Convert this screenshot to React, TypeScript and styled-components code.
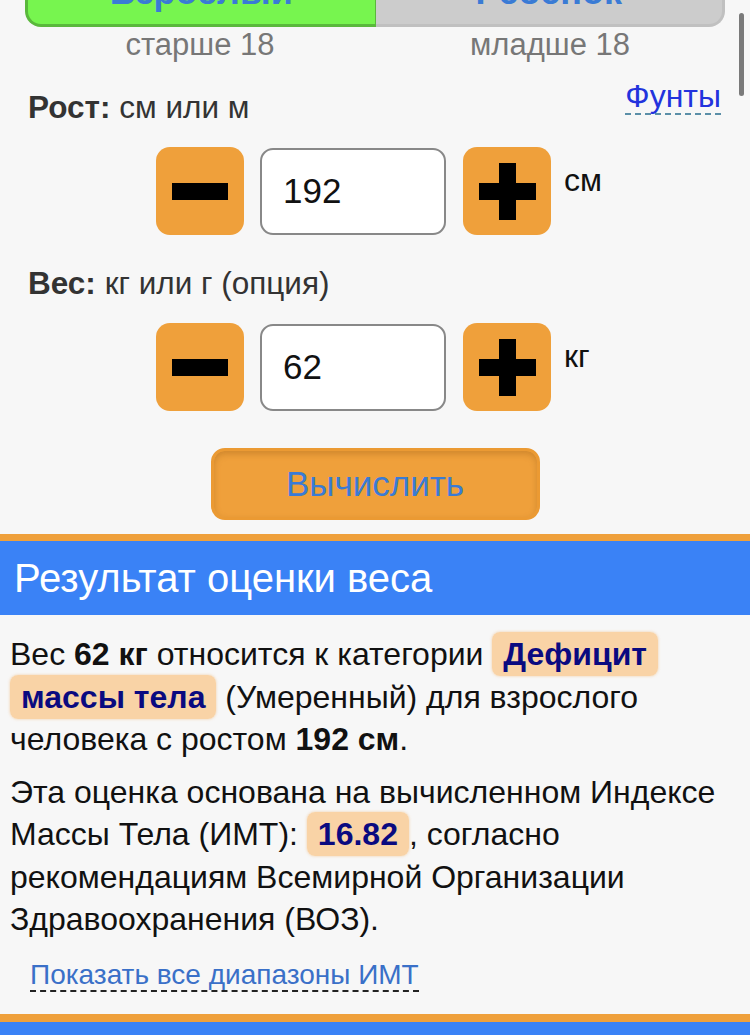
import React from "react";
import styled, { createGlobalStyle } from "styled-components";

const GlobalStyle = createGlobalStyle`
  html, body {
    margin: 0;
    padding: 0;
    background: #f7f7f7;
    font-family: "Liberation Sans", Arial, sans-serif;
    color: #111;
  }
`;

const Page = styled.div`
  width: 750px;
  min-height: 1035px;
  overflow: hidden;
  background: #f7f7f7;
`;

const Calculator = styled.div`
  padding: 0 25px;
`;

const TabsClip = styled.div`
  height: 27px;
  overflow: hidden;
  display: flex;
  align-items: flex-end;
`;

const Tabs = styled.div`
  display: flex;
  width: 100%;
  height: 90px;
  flex-shrink: 0;
`;

const Tab = styled.div<{ $active?: boolean }>`
  flex: 1;
  display: flex;
  align-items: flex-end;
  justify-content: center;
  font-size: 36px;
  line-height: 36px;
  font-weight: bold;
  color: #3a7bd5;
  background: ${(p) => (p.$active ? "#77f54f" : "#cccccc")};
  border: 3px solid ${(p) => (p.$active ? "#5ab83c" : "#c0c0c0")};
  border-top: none;
  ${(p) => (p.$active ? "border-right: 1px solid #5ab83c;" : "border-left: none;")}
  border-radius: ${(p) => (p.$active ? "0 0 0 16px" : "0 0 16px 0")};
  padding-bottom: 14px;
`;

const TabNotes = styled.div`
  display: flex;
  font-size: 31px;
  color: #777;
`;

const TabNote = styled.div`
  flex: 1;
  text-align: center;
  line-height: 36px;
`;

const FieldHead = styled.div<{ $gap: number }>`
  display: flex;
  justify-content: space-between;
  align-items: flex-start;
  margin-top: ${(p) => p.$gap}px;
  padding: 0 4px 0 3px;
  font-size: 31.5px;
  line-height: 36px;
  color: #333;
`;

const FieldLabel = styled.div`
  b {
    font-weight: bold;
  }
`;

const DashedLink = styled.span`
  color: #2233dd;
  font-size: 32px;
  line-height: 34px;
  border-bottom: 2px dashed #5b8fa8;
  margin-top: -10px;
`;

const StepRow = styled.div`
  display: flex;
  align-items: center;
  margin-top: 22px;
  padding-left: 131px;
`;

const StepButton = styled.div`
  width: 88px;
  height: 88px;
  border-radius: 14px;
  background: #efa03b;
  display: flex;
  align-items: center;
  justify-content: center;
  flex-shrink: 0;
`;

const NumberBox = styled.div`
  width: 186px;
  height: 87px;
  box-sizing: border-box;
  margin: 0 17px 0 16px;
  border: 2px solid #888;
  border-radius: 13px;
  background: #fff;
  font-size: 35px;
  color: #111;
  display: flex;
  align-items: center;
  padding-left: 21px;
`;

const Unit = styled.div`
  font-size: 32px;
  line-height: 36px;
  color: #111;
  align-self: flex-start;
  margin: 15px 0 0 13px;
`;

const CalcWrap = styled.div`
  display: flex;
  justify-content: center;
  margin-top: 37px;
`;

const CalcButton = styled.div`
  width: 329px;
  height: 72px;
  box-sizing: border-box;
  border-radius: 14px;
  background: #efa03b;
  border: 3px solid #eb9a33;
  box-shadow: inset 0 3px 6px rgba(150, 90, 20, 0.35);
  color: #3a7bd5;
  font-size: 35px;
  display: flex;
  align-items: center;
  justify-content: center;
`;

const SectionHead = styled.div`
  margin-top: 14px;
  border-top: 7px solid #efa03b;
  background: #3a82f6;
  color: #fff;
  font-size: 40px;
  height: 74px;
  display: flex;
  align-items: center;
  padding-left: 14px;
`;

const Result = styled.div`
  padding: 18px 10px 0 10px;
  font-size: 32px;
  line-height: 42.5px;
`;

const Para = styled.p`
  margin: 0 0 10px 0;
`;

const Badge = styled.span`
  background: #f9d3a6;
  color: #0a0a80;
  font-weight: bold;
  border-radius: 8px;
  padding: 4px 11px;
  box-shadow: 0 0 3px rgba(240, 180, 110, 0.6);
  box-decoration-break: clone;
  -webkit-box-decoration-break: clone;
`;

const MoreLink = styled.div`
  margin: 16px 0 0 20px;
  font-size: 28px;
  line-height: 36px;
  span {
    color: #3a70c8;
    border-bottom: 2px dashed #222;
  }
`;

const Footer = styled.div`
  margin-top: 21px;
  border-top: 8px solid #efa03b;
  background: #3a82f6;
  height: 40px;
`;

const ScrollThumb = styled.div`
  position: fixed;
  right: 6px;
  top: 13px;
  width: 5px;
  height: 83px;
  border-radius: 3px;
  background: #7a7a7a;
`;

const Minus = () => (
  <svg width="56" height="17" viewBox="0 0 56 17">
    <rect width="56" height="17" fill="#000" />
  </svg>
);

const Plus = () => (
  <svg width="57" height="57" viewBox="0 0 57 57">
    <rect x="0" y="20" width="57" height="17" fill="#000" />
    <rect x="20" y="0" width="17" height="57" fill="#000" />
  </svg>
);

function Stepper({ value, unit }: { value: string; unit: string }) {
  return (
    <StepRow>
      <StepButton>
        <Minus />
      </StepButton>
      <NumberBox>{value}</NumberBox>
      <StepButton>
        <Plus />
      </StepButton>
      <Unit>{unit}</Unit>
    </StepRow>
  );
}

export default function App() {
  return (
    <Page>
      <GlobalStyle />
      <Calculator>
        <TabsClip>
          <Tabs>
            <Tab $active>Взрослый</Tab>
            <Tab>Ребенок</Tab>
          </Tabs>
        </TabsClip>
        <TabNotes>
          <TabNote>старше 18</TabNote>
          <TabNote>младше 18</TabNote>
        </TabNotes>

        <FieldHead $gap={26}>
          <FieldLabel>
            <b>Рост:</b> см или м
          </FieldLabel>
          <DashedLink>Фунты</DashedLink>
        </FieldHead>
        <Stepper value="192" unit="см" />

        <FieldHead $gap={30}>
          <FieldLabel>
            <b>Вес:</b> кг или г (опция)
          </FieldLabel>
        </FieldHead>
        <Stepper value="62" unit="кг" />

        <CalcWrap>
          <CalcButton>Вычислить</CalcButton>
        </CalcWrap>
      </Calculator>

      <SectionHead>Результат оценки веса</SectionHead>
      <Result>
        <Para>
          Вес <b>62 кг</b> относится к категории <Badge>Дефицит массы тела</Badge>{" "}
          (Умеренный) для взрослого человека с ростом <b>192 см</b>.
        </Para>
        <Para>
          Эта оценка основана на вычисленном Индексе Массы Тела (ИМТ):{" "}
          <Badge>16.82</Badge>, согласно рекомендациям Всемирной Организации
          Здравоохранения (ВОЗ).
        </Para>
        <MoreLink>
          <span>Показать все диапазоны ИМТ</span>
        </MoreLink>
      </Result>
      <Footer />
      <ScrollThumb />
    </Page>
  );
}
